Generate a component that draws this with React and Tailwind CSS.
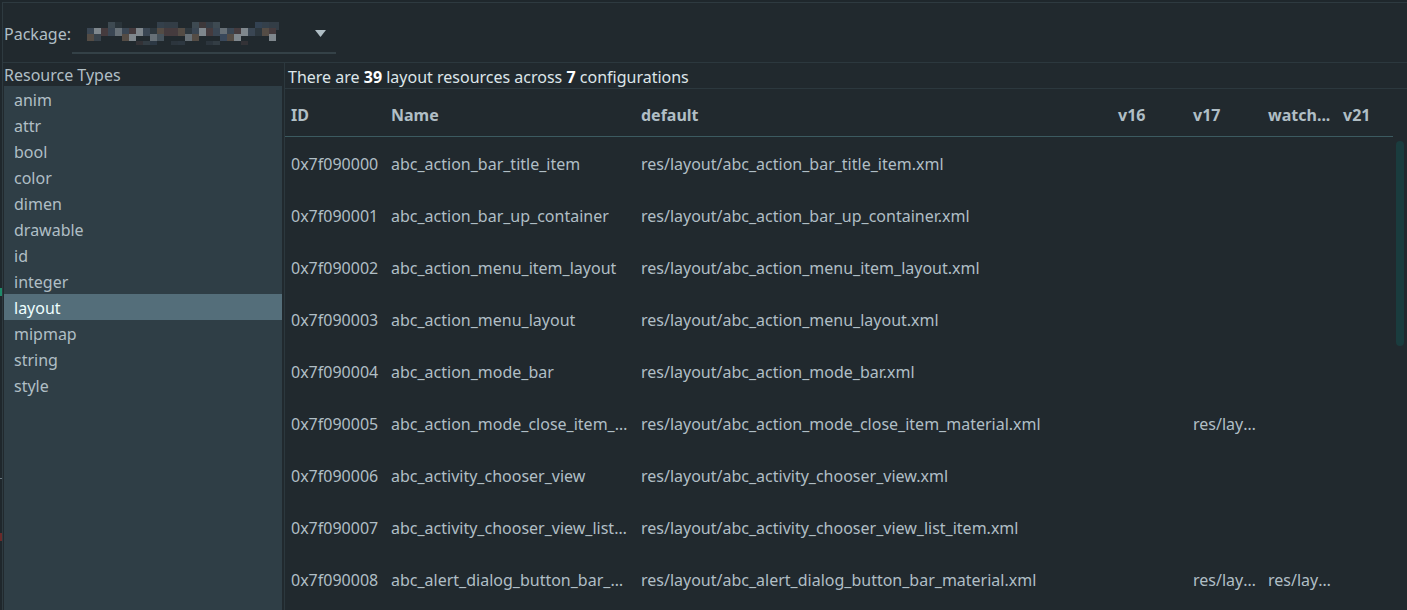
import React from "react";

const types = ["anim","attr","bool","color","dimen","drawable","id","integer","layout","mipmap","string","style"];

const rows = [
  ["0x7f090000","abc_action_bar_title_item","res/layout/abc_action_bar_title_item.xml","",""],
  ["0x7f090001","abc_action_bar_up_container","res/layout/abc_action_bar_up_container.xml","",""],
  ["0x7f090002","abc_action_menu_item_layout","res/layout/abc_action_menu_item_layout.xml","",""],
  ["0x7f090003","abc_action_menu_layout","res/layout/abc_action_menu_layout.xml","",""],
  ["0x7f090004","abc_action_mode_bar","res/layout/abc_action_mode_bar.xml","",""],
  ["0x7f090005","abc_action_mode_close_item_material","res/layout/abc_action_mode_close_item_material.xml","res/layout/abc_action_mode_close_item_material.xml",""],
  ["0x7f090006","abc_activity_chooser_view","res/layout/abc_activity_chooser_view.xml","",""],
  ["0x7f090007","abc_activity_chooser_view_list_item","res/layout/abc_activity_chooser_view_list_item.xml","",""],
  ["0x7f090008","abc_alert_dialog_button_bar_material","res/layout/abc_alert_dialog_button_bar_material.xml","res/layout/abc_alert_dialog_button_bar_material.xml","res/layout/abc_alert_dialog_button_bar_material.xml"],
];

const palette = ["#4b5760","#6b747a","#55606a","#3c4650","#6f7880","#3d4a58","#5a646c","#7a8288","#4a3e40","#3c4c60","#5a5048","#606a72","#3e4a56","#8a9298","#2f3940"];
const mosaicRows = [
  [0, 8, [3, 4, 10, 11, 12, 15, 16, 17, 18, 24, 25, 26, 27, 33]],
  [6, 8, Array.from({ length: 27 }, (_, i) => i)],
  [12, 7, [0, 1, 5, 6, 9, 10, 14, 15, 19, 20, 21, 26]],
  [19, 4, [7, 8, 9, 12, 13, 17, 18, 22]],
];

export default function App() {
  return (
    <div className="w-[1407px] h-[610px] overflow-hidden bg-[#1f272c] pt-[2px] pl-[2px] font-['Noto_Sans',sans-serif] text-[16px] relative">
      <div className="absolute left-0 top-[288px] w-[2px] h-[8px] bg-[#1e8a6a]" />
      <div className="absolute left-0 top-[478px] w-[2px] h-[1px] bg-[#6a7880]" />
      <div className="absolute left-0 top-[533px] w-[2px] h-[8px] bg-[#6a2a2a]" />
      <div className="h-full border-t border-l border-[#2e3a40] bg-[#21292e] flex flex-col">
        {/* Package row */}
        <div className="h-[60px] flex items-end pb-[8px] shrink-0 border-b border-[#2c383e]">
          <div className="pl-[1px] w-[69px] h-[38px] border-b-2 border-transparent flex items-center text-[#b0bec5]">Package:</div>
          <div className="w-[264px] h-[38px] border-b-2 border-[#344147] flex items-center relative">
            <svg width="192" height="24" className="ml-[15px] opacity-90" viewBox="0 0 192 24">
              {mosaicRows.map(([y, h, cols], r) =>
                cols.map((c) => (
                  <rect
                    key={r + "-" + c}
                    x={c * 7}
                    y={y}
                    width={7}
                    height={h}
                    fill={palette[(c * 7 + r * 5 + c * c) % palette.length]}
                    opacity={r === 3 ? 0.5 : r === 0 ? 0.8 : 1}
                  />
                ))
              )}
            </svg>
            <svg width="11" height="8" viewBox="0 0 11 8" className="absolute left-[243px] top-[14px]">
              <path d="M0 0 L11 0 L5.5 7 Z" fill="#b0bec5" />
            </svg>
          </div>
        </div>
        {/* body */}
        <div className="flex-1 flex min-h-0">
          {/* left */}
          <div className="w-[279px] shrink-0 flex flex-col">
            <div className="h-[23px] pl-[1px] flex items-center text-[#b0bec5] leading-none">Resource Types</div>
            <div className="flex-1 ml-[1px] bg-[#2f3e46] flex flex-col">
              {types.map((t) => (
                <div
                  key={t}
                  className={
                    "h-[26px] pl-[10px] pt-[1px] flex items-center " +
                    (t === "layout" ? "bg-[#546e7a] text-[#eeffff]" : "text-[#b0bec5]")
                  }
                >
                  {t}
                </div>
              ))}
            </div>
          </div>
          {/* right */}
          <div className="flex-1 ml-[2px] border-l border-[#2c383e] flex flex-col min-w-0">
            <div className="h-[26px] shrink-0 border-b border-[#2c383e] pl-[3px] pt-[2px] flex items-center text-[#dde5e9]">
              <span>
                There are <b className="text-white">39</b> layout resources across <b className="text-white">7</b> configurations
              </span>
            </div>
            <div className="flex-1 flex min-h-0 relative">
              <div className="w-[1108px] shrink-0">
                <div className="h-[48px] pt-[4px] flex items-center border-b border-[#3c5a60] font-bold text-[#b0bec5]">
                  <div className="w-[100px] pl-[6px]">ID</div>
                  <div className="w-[250px] pl-[6px]">Name</div>
                  <div className="w-[477px] pl-[6px]">default</div>
                  <div className="w-[75px] pl-[6px]">v16</div>
                  <div className="w-[75px] pl-[6px]">v17</div>
                  <div className="w-[75px] pl-[6px]">watch...</div>
                  <div className="w-[56px] pl-[6px]">v21</div>
                </div>
                {rows.map((r) => (
                  <div key={r[0]} className="h-[52px] pt-[2px] flex items-center text-[#b0bec5]">
                    <div className="w-[100px] pl-[6px] truncate">{r[0]}</div>
                    <div className="w-[250px] pl-[6px] pr-[6px] truncate">{r[1]}</div>
                    <div className="w-[477px] pl-[6px] truncate">{r[2]}</div>
                    <div className="w-[75px] pl-[6px]"></div>
                    <div className="w-[75px] pl-[6px] pr-[4px] truncate">{r[3]}</div>
                    <div className="w-[75px] pl-[6px] pr-[4px] truncate">{r[4]}</div>
                    <div className="w-[56px] pl-[6px]"></div>
                  </div>
                ))}
              </div>
              <div className="absolute left-[1111px] top-[52px] w-[8px] h-[205px] rounded-full bg-[#1a3c3e]" />
            </div>
          </div>
        </div>
      </div>
    </div>
  );
}
